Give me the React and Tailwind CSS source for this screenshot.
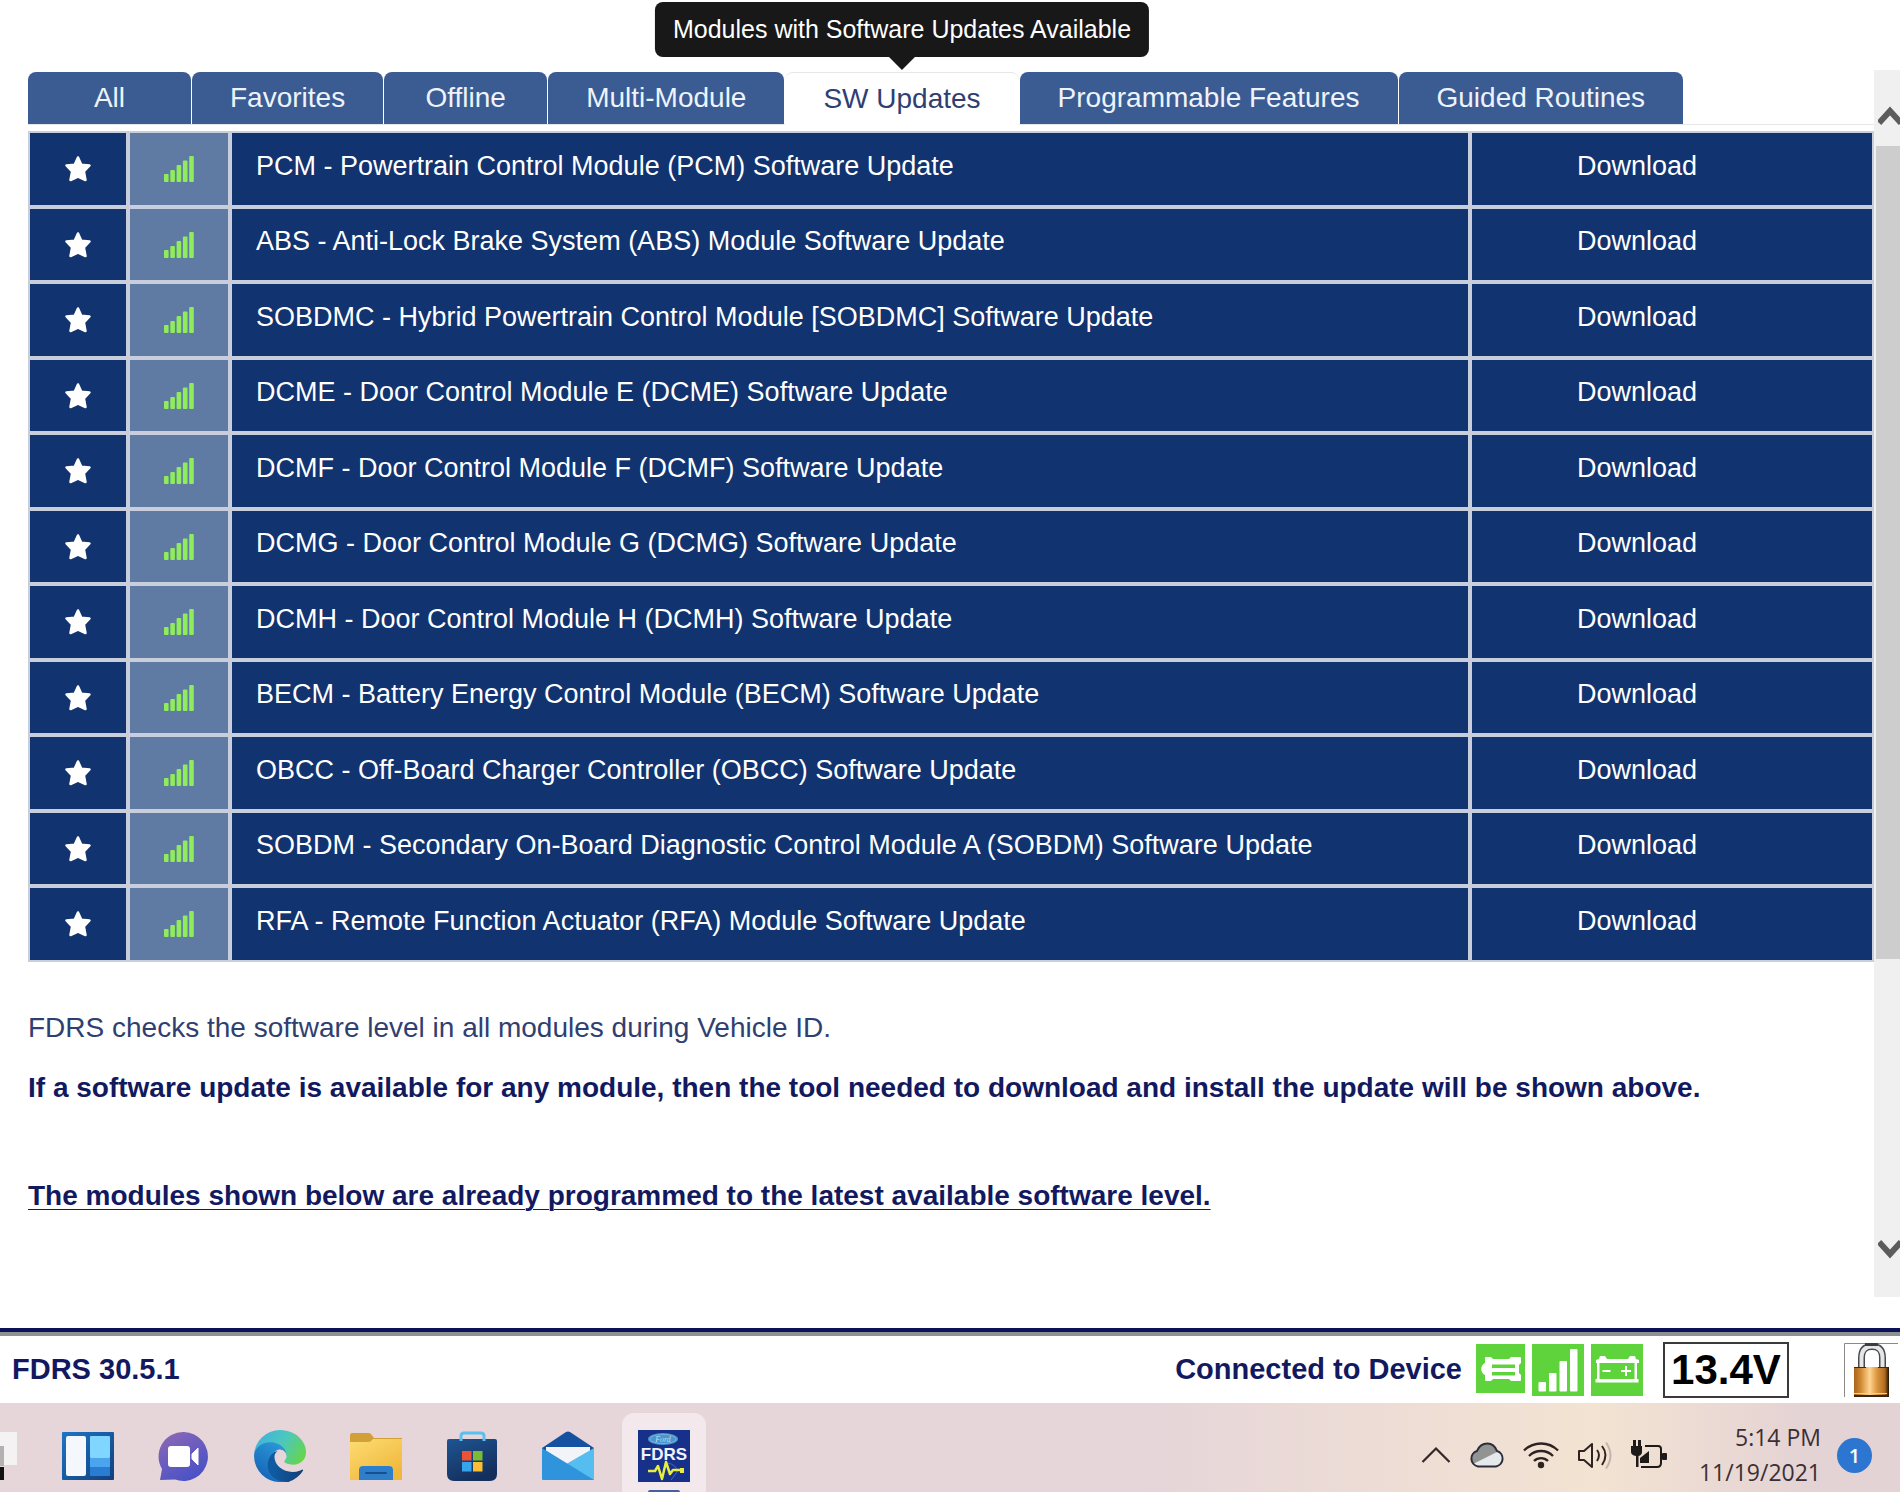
import { useState } from 'react';
import clsx from 'clsx';

const tabs = [
  { label: 'All' },
  { label: 'Favorites' },
  { label: 'Offline' },
  { label: 'Multi-Module' },
  { label: 'SW Updates', tip: 'Modules with Software Updates Available' },
  { label: 'Programmable Features' },
  { label: 'Guided Routines' },
];

const modules = [
  'PCM - Powertrain Control Module (PCM) Software Update',
  'ABS - Anti-Lock Brake System (ABS) Module Software Update',
  'SOBDMC - Hybrid Powertrain Control Module [SOBDMC] Software Update',
  'DCME - Door Control Module E (DCME) Software Update',
  'DCMF - Door Control Module F (DCMF) Software Update',
  'DCMG - Door Control Module G (DCMG) Software Update',
  'DCMH - Door Control Module H (DCMH) Software Update',
  'BECM - Battery Energy Control Module (BECM) Software Update',
  'OBCC - Off-Board Charger Controller (OBCC) Software Update',
  'SOBDM - Secondary On-Board Diagnostic Control Module A (SOBDM) Software Update',
  'RFA - Remote Function Actuator (RFA) Module Software Update',
];

const StarIcon = () => (
  <svg viewBox="0 0 28 28" className="h-7 w-7" fill="#fff" stroke="#fff" strokeWidth="2.500" strokeLinejoin="round">
    <path d="M14 2.500l3.300 7.200 8.200.8-5.600 6 1.600 8.500-7.500-3.400-7.500 3.400 1.600-8.500-5.600-6 8.200-.8z" />
  </svg>
);

const LevelIcon = () => (
  <svg viewBox="0 0 30 26" className="h-[26px] w-[30px]" fill="#8fec5b">
    <rect x="0" y="18" width="4.600" height="8" rx="1" />
    <rect x="6.300" y="14" width="4.600" height="12" rx="1" />
    <rect x="12.600" y="9" width="4.600" height="17" rx="1" />
    <rect x="18.900" y="4.500" width="4.600" height="21.500" rx="1" />
    <rect x="25.200" y="0" width="4.600" height="26" rx="1" />
  </svg>
);

const ScrollArrow = ({ down }) => (
  <svg viewBox="0 0 24 20" className="h-5 w-6 shrink-0" fill="none" stroke="#5c5c5c" strokeWidth="6">
    <path d={down ? 'M1 3l11 12L23 3' : 'M1 17L12 5l11 12'} />
  </svg>
);

// Status bar icons
const VciIcon = () => (
  <svg viewBox="0 0 49 49" className="h-[49px] w-[49px]">
    <rect width="49" height="49" fill="#5fd33c" />
    <path
      d="M9 14q0-1 1-1h5l2 2h16l2-2h9q1 0 1 1v5l-2 2v8l2 2v5q0 1-1 1h-9l-2-2H17l-2 2h-5q-1 0-1-1v-5c-5-2-5-10 0-12z"
      fill="#fff"
    />
    <path d="M16 20.500h23v3.500H16zM16 28h23v3.500H16z" fill="#5fd33c" />
  </svg>
);

const SignalIcon = () => (
  <svg viewBox="0 0 52 52" className="h-[52px] w-[52px]">
    <rect width="52" height="52" fill="#5fd33c" />
    <g fill="#fff">
      <rect x="6.500" y="38" width="7.500" height="9.500" rx="1" />
      <rect x="17" y="29" width="7.500" height="18.500" rx="1" />
      <rect x="27.500" y="17" width="7.500" height="30.500" rx="1" />
      <rect x="38" y="5" width="7.500" height="42.500" rx="1" />
    </g>
  </svg>
);

const BatteryStatusIcon = () => (
  <svg viewBox="0 0 52 52" className="h-[52px] w-[52px]">
    <rect width="52" height="52" fill="#5fd33c" />
    <g fill="#fff">
      <path d="M5 19v-3l3-1 1-3h5l2 3h21l2-3h5l1 3 3 1v3z" />
      <rect x="6" y="18" width="2.500" height="18" />
      <rect x="43.500" y="18" width="2.500" height="18" />
      <rect x="4.500" y="35" width="43" height="3.500" />
      <rect x="11.500" y="26" width="8" height="2" />
      <rect x="30" y="26" width="10" height="2" />
      <rect x="34" y="22" width="2" height="10" />
    </g>
  </svg>
);

const LockIcon = () => (
  <svg viewBox="0 0 54 54" className="h-[54px] w-[54px]">
    <defs>
      <linearGradient id="brass">
        <stop offset="0" stopColor="#a8651e" />
        <stop offset=".18" stopColor="#cf8630" />
        <stop offset=".45" stopColor="#ffd592" />
        <stop offset=".65" stopColor="#dd9840" />
        <stop offset=".88" stopColor="#b06a20" />
        <stop offset="1" stopColor="#1d1408" />
      </linearGradient>
    </defs>
    <path d="M.5 54V.5H54" stroke="#8a8a8a" fill="none" />
    <path d="M17.500 26V15C17.500 6 22 3.500 28 3.500S38.500 6 38.500 15v11" stroke="#4a4a4a" strokeWidth="7" fill="none" />
    <path d="M17.500 26V15C17.500 6 22 3.500 28 3.500S38.500 6 38.500 15v11" stroke="#e4e6ea" strokeWidth="4" fill="none" />
    <path d="M21 1.500h13" stroke="#3d3d3d" strokeWidth="3" />
    <rect x="10" y="24" width="35" height="30" rx="1" fill="url(#brass)" />
    <path d="M10 24.500h12M34 24.500h11" stroke="#3b2a18" />
    <path d="M10 50.500h33" stroke="#f5d77a" />
    <path d="M10 53h35" stroke="#3b2410" strokeWidth="2" />
  </svg>
);

// Taskbar icons
const StartIcon = () => (
  <svg viewBox="0 0 18 52" className="h-[52px] w-[18px]">
    <rect x="-30" y="2" width="47" height="33" fill="#f4f2f2" />
    <rect x="-30" y="16" width="34" height="20" fill="#b3b1b2" />
    <rect x="-30" y="37" width="34" height="13" fill="#111" />
  </svg>
);

const WidgetsIcon = () => (
  <svg viewBox="0 0 52 52" className="h-[52px] w-[52px]">
    <defs>
      <linearGradient id="wbg" x2="1" y2="1">
        <stop offset="0" stopColor="#1c76c4" />
        <stop offset="1" stopColor="#123f7d" />
      </linearGradient>
    </defs>
    <rect y="2" width="52" height="48" rx="1" fill="url(#wbg)" />
    <rect x="4" y="6" width="20" height="40" rx="2" fill="#f4f7fb" />
    <rect x="28" y="6" width="20" height="22" rx="1" fill="#80d6ff" />
    <rect x="28" y="28" width="20" height="9" fill="#4aa5ee" />
    <rect x="28" y="37" width="20" height="9" rx="1" fill="#2a7cd3" />
  </svg>
);

const ChatIcon = () => (
  <svg viewBox="0 0 52 52" className="h-[52px] w-[52px]">
    <defs>
      <linearGradient id="chat" x2=".6" y2="1">
        <stop offset="0" stopColor="#9069b5" />
        <stop offset="1" stopColor="#4a52c6" />
      </linearGradient>
    </defs>
    <path d="M26 2a24.500 24.500 0 11-9 47.500L2 50l2-11A24.500 24.500 0 0126 2z" fill="url(#chat)" />
    <rect x="10" y="16" width="22" height="21" rx="3" fill="#fff" />
    <path d="M34 24l6-6v17l-6-6z" fill="#fff" stroke="#fff" strokeLinejoin="round" />
  </svg>
);

const EdgeIcon = () => (
  <svg viewBox="0 0 256 256" className="h-[52px] w-[52px]">
    <defs>
      <linearGradient id="e1" x1=".2" x2="1" y1=".7" y2=".7">
        <stop offset="0" stopColor="#0f5aa0" />
        <stop offset="1" stopColor="#123f78" />
      </linearGradient>
      <linearGradient id="e2" x1=".8" y1=".1" x2=".3" y2="1">
        <stop offset="0" stopColor="#2b98d8" />
        <stop offset="1" stopColor="#1563b5" />
      </linearGradient>
      <linearGradient id="e3" x1="0" y1=".3" x2="1" y2=".7">
        <stop offset="0" stopColor="#3fb2dd" />
        <stop offset=".5" stopColor="#4cc8bd" />
        <stop offset="1" stopColor="#66d54a" />
      </linearGradient>
    </defs>
    <path
      fill="url(#e1)"
      d="M235.700 195.500a93.700 93.700 0 01-10.600 4.700 101.900 101.900 0 01-35.900 6.400c-47.300 0-88.500-32.500-88.500-74.300a31.500 31.500 0 0116.400-27.300c-42.800 1.800-53.800 46.400-53.800 72.500 0 74 68.100 81.400 82.800 81.400 7.900 0 19.800-2.300 27-4.600l1.300-.4a128.300 128.300 0 0066.600-52.800 4 4 0 00-5.300-5.600z"
    />
    <path
      fill="url(#e2)"
      d="M105.700 241.300a79.200 79.200 0 01-22.700-21.300 80.700 80.700 0 0129.600-120c3.200-1.500 8.500-4.100 15.600-4a32.400 32.400 0 0125.700 13 31.900 31.900 0 016.300 18.700c0-.2 24.500-79.600-80-79.600-43.900 0-80 41.700-80 78.200a130.200 130.200 0 0012.100 56 128 128 0 00156.400 67.100 75.500 75.500 0 01-62.800-8z"
    />
    <path
      fill="url(#e3)"
      d="M152.300 148.900c-.8 1-3.300 2.500-3.300 5.700 0 2.600 1.700 5.100 4.700 7.200 14.400 10 41.500 8.700 41.600 8.700a59.600 59.600 0 0030.300-8.300 61.400 61.400 0 0030.400-52.900c.3-22.400-8-37.300-11.300-43.900C223.500 23.900 177.700 0 128 0A128 128 0 000 126.200c.5-36.500 36.800-66 80-66 3.500 0 23.500.3 42 10.100 16.300 8.500 24.900 18.800 30.900 29.100 6.200 10.700 7.300 24.100 7.300 29.500s-2.700 13.300-7.900 20z"
    />
  </svg>
);

const FolderIcon = () => (
  <svg viewBox="0 0 52 52" className="h-[52px] w-[52px]">
    <defs>
      <linearGradient id="folder" x2=".7" y2="1">
        <stop offset="0" stopColor="#fddc74" />
        <stop offset="1" stopColor="#f0b73a" />
      </linearGradient>
    </defs>
    <path d="M0 5q0-2 2-2h16q2 0 3 1l3 4h28v6H0z" fill="#d2a036" />
    <path d="M0 12h18q2 0 3-1l2-2h29v41H0z" fill="url(#folder)" />
    <path d="M9 50V40q0-4 4-4h26q4 0 4 4v10z" fill="#2d7fcc" />
    <path d="M16 43h20" stroke="#17508d" strokeWidth="2" strokeLinecap="round" />
  </svg>
);

const StoreIcon = () => (
  <svg viewBox="0 0 52 52" className="h-[52px] w-[52px]">
    <defs>
      <linearGradient id="store" x2=".5" y2="1">
        <stop offset="0" stopColor="#1e5593" />
        <stop offset="1" stopColor="#142f5c" />
      </linearGradient>
    </defs>
    <path d="M1 11q0-2 2-2h46q2 0 2 2v33q0 7-7 7H8q-7 0-7-7z" fill="url(#store)" />
    <path d="M15 11V6q0-3 3-3h17q3 0 3 3v5" stroke="#5bc0ee" strokeWidth="3" fill="none" />
    <rect x="16" y="21" width="9.500" height="9.500" fill="#ee5236" />
    <rect x="27" y="21" width="9.500" height="9.500" fill="#7dbb35" />
    <rect x="16" y="32" width="9.500" height="9.500" fill="#36a4ec" />
    <rect x="27" y="32" width="9.500" height="9.500" fill="#fcbc33" />
  </svg>
);

const MailIcon = () => (
  <svg viewBox="0 0 52 52" className="h-[52px] w-[52px]">
    <path d="M0 18L24 2q2-1 4 0l24 16v6H0z" fill="#1650a0" />
    <path d="M4 17h44v4L26 34 4 21z" fill="#f3f4f7" />
    <path d="M52 18v32H4l22-17z" fill="#55bdf0" />
    <path d="M0 18l52 32H1q-1 0-1-1z" fill="#2f94dc" />
  </svg>
);

const FdrsIcon = () => (
  <svg viewBox="0 0 52 52" className="h-[52px] w-[52px]">
    <rect width="52" height="52" fill="#17318a" />
    <ellipse cx="25" cy="9" rx="15" ry="6" fill="#4d94cc" />
    <ellipse cx="25" cy="9" rx="13" ry="4.600" fill="none" stroke="#7fbbe2" strokeWidth=".7" />
    <text x="25" y="12" textAnchor="middle" fontSize="8" fontStyle="italic" fontFamily="Liberation Serif, serif" fill="#b4dcf2">Ford</text>
    <path d="M30 33q9 2 9 9l-6 8" stroke="#3f6cc0" fill="none" />
    <text x="26" y="30" textAnchor="middle" fontSize="17" fontWeight="bold" fontFamily="Liberation Sans, sans-serif" fill="#f2f3fa">FDRS</text>
    <path d="M10 41h7l3-5 4 13 4-17 4 12 3-4h8" stroke="#e8ee3c" strokeWidth="2.500" fill="none" strokeLinejoin="round" />
    <rect x="42" y="38" width="4" height="5" fill="#e8ee3c" />
  </svg>
);

const apps = [
  { name: 'Widgets', Icon: WidgetsIcon },
  { name: 'Chat', Icon: ChatIcon },
  { name: 'Edge', Icon: EdgeIcon },
  { name: 'File Explorer', Icon: FolderIcon },
  { name: 'Store', Icon: StoreIcon },
  { name: 'Mail', Icon: MailIcon },
  { name: 'FDRS', Icon: FdrsIcon, open: true },
];

// Tray icons
const ChevronIcon = () => (
  <svg viewBox="0 0 30 30" className="h-[30px] w-[30px]" fill="none" stroke="#33292b" strokeWidth="2.200">
    <path d="M1.500 22L15 8.500 28.500 22" />
  </svg>
);

const CloudIcon = () => (
  <svg viewBox="0 0 36 30" className="h-[30px] w-9">
    <path d="M9 26.500a8 8 0 01-1-15.500C10 6 14 3.500 18.500 3.500S26 6 28 11a8 8 0 01-1 15.500z" fill="#929494" />
    <path d="M4 24L29 11.500a8 8 0 01-2 15H9q-3 0-5-2.500z" fill="#e6e9ec" />
    <path d="M9 26.500a8 8 0 01-1-15.500C10 6 14 3.500 18.500 3.500S26 6 28 11a8 8 0 01-1 15.500z" fill="none" stroke="#2b2e38" strokeWidth="2" />
  </svg>
);

const WifiIcon = () => (
  <svg viewBox="0 0 36 30" className="h-[30px] w-9" fill="none" stroke="#2d2422" strokeWidth="2.400">
    <path d="M1 10.500a24 24 0 0134 0M6 16a17 17 0 0124 0M11 21a10 10 0 0114 0" />
    <circle cx="18" cy="25" r="2" fill="#2d2422" />
  </svg>
);

const SpeakerIcon = () => (
  <svg viewBox="0 0 36 30" className="h-[30px] w-9" fill="none" stroke="#2d2422" strokeWidth="2" strokeLinejoin="round">
    <path d="M2 11h5l8-7v23l-8-7H2z" />
    <path d="M20 10q4 5 0 11M25 6q7 9 0 19" />
    <path d="M29 2.500q9 13 0 26" stroke="#c3b5ac" />
  </svg>
);

const ChargingIcon = () => (
  <svg viewBox="0 0 36 30" className="h-[30px] w-9">
    <path d="M14 6h13q3 0 3 3v14q0 4-4 4H10" fill="none" stroke="#1f1a1a" strokeWidth="2" />
    <rect x="31" y="13" width="5" height="7" rx="1" fill="#1f1a1a" />
    <path d="M0 6h11v6q0 3-3.500 4v11H5V16Q0 15 0 12zM2 0h3v6H2zM7 0h3v6H7z" fill="#1f1a1a" />
    <path d="M9 23v-5l9-7v12z" fill="#1f1a1a" />
  </svg>
);

const tray = [
  { name: 'Show hidden icons', Icon: ChevronIcon },
  { name: 'OneDrive', Icon: CloudIcon },
  { name: 'Network', Icon: WifiIcon },
  { name: 'Volume', Icon: SpeakerIcon },
  { name: 'Battery', Icon: ChargingIcon },
];

export default function App() {
  const [active, setActive] = useState('SW Updates');

  return (
    <div className="flex min-h-screen flex-col overflow-x-hidden bg-white font-['Liberation_Sans',Arial,sans-serif]">
      <main className="flex grow pt-[70px] pb-[31px]">
        <div className="min-w-0 grow pl-7">
          <div role="tablist" className="mt-[2px] flex h-[53px] gap-px border-b border-gray-200">
            {tabs.map(({ label, tip }) => (
              <button
                key={label}
                role="tab"
                aria-selected={label === active}
                onClick={() => setActive(label)}
                className={clsx(
                  'relative min-w-[163px] rounded-t-lg px-[38px] text-[28px] whitespace-nowrap',
                  label === active
                    ? '-mb-px border-t border-gray-200 bg-white text-[#2f3f72]'
                    : 'bg-[#3a5c92] text-[#eef3fb]'
                )}
              >
                {label}
                {tip && label === active && (
                  <span
                    role="tooltip"
                    className="absolute bottom-full left-1/2 mb-4 -translate-x-1/2 rounded-lg bg-[#181818] px-[18px] text-[25px] leading-[55px] text-white"
                  >
                    {tip}
                    <svg viewBox="0 0 26 13" className="absolute top-full left-1/2 h-[13px] w-[26px] -translate-x-1/2">
                      <path d="M0 0h26L13 13z" fill="#181818" />
                    </svg>
                  </span>
                )}
              </button>
            ))}
          </div>

          <table className="mt-[6px] w-full table-fixed border-separate border-spacing-0 text-[27px] text-white">
            <colgroup>
              <col className="w-[100px]" />
              <col className="w-[102px]" />
              <col />
              <col className="w-[404px]" />
            </colgroup>
            <tbody>
              {modules.map((name) => (
                <tr key={name} className="odd:h-[76px] even:h-[75px] last:h-[77px]">
                  <td className="border-2 border-[#c8cedc] bg-[#11336f] p-0">
                    <button aria-label="Favorite" className="mx-auto block">
                      <StarIcon />
                    </button>
                  </td>
                  <td className="border-2 border-[#c8cedc] bg-[#607ba3] p-0">
                    <div className="flex justify-center">
                      <LevelIcon />
                    </div>
                  </td>
                  <td className="truncate border-2 border-[#c8cedc] bg-[#11336f] pt-0 pb-[6px] pl-6">{name}</td>
                  <td className="border-2 border-[#c8cedc] bg-[#11336f] pt-0 pr-[70px] pb-[6px] text-center">
                    <button>Download</button>
                  </td>
                </tr>
              ))}
            </tbody>
          </table>

          <div className="text-[28px] leading-10 font-bold text-[#12195f]">
            <p className="mt-[46px] font-normal text-[#2f4070]">
              FDRS checks the software level in all modules during Vehicle ID.
            </p>
            <p className="mt-5">
              If a software update is available for any module, then the tool needed to download and install the update
              will be shown above.
            </p>
            <p className="mt-[68px] underline decoration-1 underline-offset-4">
              The modules shown below are already programmed to the latest available software level.
            </p>
          </div>
        </div>

        {/* Scrollbar */}
        <div className="flex w-[26px] shrink-0 flex-col overflow-hidden bg-[#f0f0f0]">
          <button aria-label="Scroll up" className="flex h-[76px] items-center pt-4 pl-1">
            <ScrollArrow />
          </button>
          <div className="ml-[2px] grow-[813] basis-0 bg-[#cdcdcd]" />
          <div className="grow-[262] basis-0" />
          <button aria-label="Scroll down" className="flex h-[76px] items-center pb-5 pl-1">
            <ScrollArrow down />
          </button>
        </div>
      </main>

      <footer className="border-t-4 border-[#0b1259]">
        <div className="flex h-[71px] items-center border-t-4 border-[#8e9092] pr-[2px] pl-3 text-[29px] font-bold text-[#12195f]">
          <span>FDRS 30.5.1</span>
          <span className="mr-[14px] ml-auto">Connected to Device</span>
          <div className="mr-5 flex items-start gap-[7px]">
            <VciIcon />
            <SignalIcon />
            <BatteryStatusIcon />
          </div>
          <output className="mr-[55px] w-[126px] border-2 border-[#3a3a3a] text-center text-[42px] leading-[52px] text-black">
            13.4V
          </output>
          <LockIcon />
        </div>
      </footer>

      <div className="flex h-[89px] items-start bg-linear-to-r from-[#e6d5d9] from-60% via-[#f3e3d2] via-84% to-[#e4d3d4] to-95%">
        <button aria-label="Start" className="mr-7 pt-[27px]">
          <StartIcon />
        </button>
        <div className="flex gap-3 self-end">
          {apps.map(({ name, Icon, open }) => (
            <button
              key={name}
              aria-label={name}
              className={clsx(
                'flex h-[79px] w-[84px] flex-col items-center justify-between rounded-t-xl pt-[17px]',
                open && 'bg-[#f3e9ec]'
              )}
            >
              <Icon />
              {open && <span className="h-[2px] w-8 rounded-t-full bg-[#4a5f9e]" />}
            </button>
          ))}
        </div>
        <div className="ml-auto flex gap-[18px] pt-[37px] pr-8">
          {tray.map(({ name, Icon }) => (
            <button key={name} aria-label={name}>
              <Icon />
            </button>
          ))}
        </div>
        <div className="pt-[17px] text-right font-['Open_Sans','Noto_Sans',sans-serif] text-[23px] leading-[35px] text-[#3b2f33]">
          <p>5:14 PM</p>
          <p>11/19/2021</p>
        </div>
        <div className="mt-[35px] mr-7 ml-4 flex h-[35px] w-[35px] items-center justify-center rounded-full bg-[#2c76d2] font-['Open_Sans','Noto_Sans',sans-serif] text-xl font-semibold text-white">
          1
        </div>
      </div>
    </div>
  );
}
